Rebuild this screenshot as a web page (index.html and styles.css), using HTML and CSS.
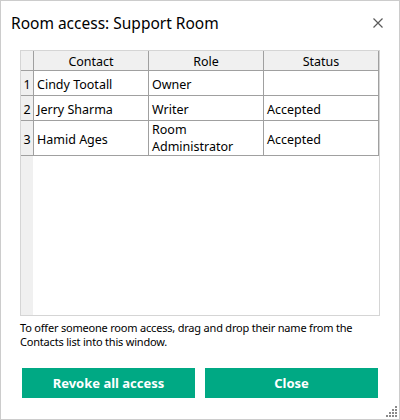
FILE: index.html
```html
<!DOCTYPE html>
<html>
<head>
<meta charset="utf-8">
<link rel="stylesheet" href="styles.css">
</head>
<body>
<div class="window">
  <div class="titlebar">
    <div class="title">Room access: Support Room</div>
    <svg class="close" width="10" height="10" viewBox="0 0 10 10"><path d="M0.5 0.5L9.5 9.5M9.5 0.5L0.5 9.5" stroke="#5a5a5a" stroke-width="1.2" fill="none"/></svg>
  </div>
  <div class="grid">
    <table class="members">
      <thead>
        <tr class="head">
          <th class="num"></th>
          <th class="col">Contact</th>
          <th class="col">Role</th>
          <th class="col">Status</th>
        </tr>
      </thead>
      <tbody>
        <tr class="row">
          <td class="num">1</td>
          <td>Cindy Tootall</td>
          <td>Owner</td>
          <td></td>
        </tr>
        <tr class="row">
          <td class="num">2</td>
          <td>Jerry Sharma</td>
          <td>Writer</td>
          <td>Accepted</td>
        </tr>
        <tr class="row tall">
          <td class="num">3</td>
          <td>Hamid Ages</td>
          <td class="multi">Room<br>Administrator</td>
          <td>Accepted</td>
        </tr>
      </tbody>
    </table>
    <div class="filler"><div class="gutter"></div></div>
  </div>
  <p class="hint">To offer someone room access, drag and drop their name from the Contacts list into this window.</p>
  <div class="buttons">
    <button class="btn">Revoke all access</button>
    <button class="btn">Close</button>
  </div>
  <svg class="grip" width="12" height="12" viewBox="0 0 12 12">
    <g fill="#8a8a8a">
      <rect x="9" y="0" width="2" height="2"/>
      <rect x="6" y="3" width="2" height="2"/><rect x="9" y="3" width="2" height="2"/>
      <rect x="3" y="6" width="2" height="2"/><rect x="6" y="6" width="2" height="2"/><rect x="9" y="6" width="2" height="2"/>
      <rect x="0" y="9" width="2" height="2"/><rect x="3" y="9" width="2" height="2"/><rect x="6" y="9" width="2" height="2"/><rect x="9" y="9" width="2" height="2"/>
    </g>
  </svg>
</div>
</body>
</html>
```
FILE: styles.css
```css
html, body {
  margin: 0;
  padding: 0;
  background: #ffffff;
}
.window {
  position: relative;
  width: 400px;
  height: 420px;
  box-sizing: border-box;
  border: 1px solid #cccccc;
  background: #ffffff;
  font-family: "Noto Sans", "Open Sans", sans-serif;
  color: #000000;
  display: flex;
  flex-direction: column;
}
.titlebar {
  height: 49px;
  box-sizing: border-box;
  padding: 12px 16px 0 10px;
  display: flex;
  justify-content: space-between;
  align-items: flex-start;
}
.title {
  font-size: 15.5px;
  line-height: 20px;
  color: #000;
}
.close {
  margin-top: 5px;
}
.grid {
  margin: 0 19px;
  height: 266px;
  box-sizing: border-box;
  border: 1px solid #d5d5d5;
  display: flex;
  flex-direction: column;
}
.members {
  border-collapse: separate;
  border-spacing: 0;
  table-layout: fixed;
  width: 358px;
  font-size: 12.5px;
}
.members th, .members td {
  box-sizing: border-box;
  border-right: 1px solid #a0a0a0;
  border-bottom: 1px solid #a0a0a0;
  padding: 3px 3px 0;
  text-align: left;
  vertical-align: middle;
  font-weight: normal;
  line-height: 16px;
  white-space: nowrap;
  overflow: hidden;
}
.members th {
  background: #f0f0f0;
  text-align: center;
  height: 20px;
  padding-top: 2px;
}
.members th.num { width: 13px; }
.members th.col { width: 115px; }
.members td.num {
  background: #f0f0f0;
  text-align: center;
  padding-left: 0;
  padding-right: 0;
}
.row td { height: 25px; }
.row.tall td { height: 35px; }
.members td.multi {
  padding-top: 1px;
  line-height: 16.5px;
}
.filler {
  flex: 1;
  display: flex;
}
.gutter {
  width: 12px;
  background: #f0f0f0;
}
.hint {
  margin: 5px 0 0 19px;
  width: 360px;
  font-size: 11px;
  letter-spacing: -0.2px;
  line-height: 14px;
  color: #000;
}
.buttons {
  margin: 19px 0 0 21px;
  display: flex;
  gap: 10px;
}
.btn {
  width: 173px;
  height: 30px;
  border: none;
  background: #00a984;
  color: #ffffff;
  font-family: "Noto Sans", "Open Sans", sans-serif;
  font-weight: bold;
  font-size: 13px;
  padding: 0;
}
.grip {
  position: absolute;
  right: 1px;
  bottom: 1px;
}
```
